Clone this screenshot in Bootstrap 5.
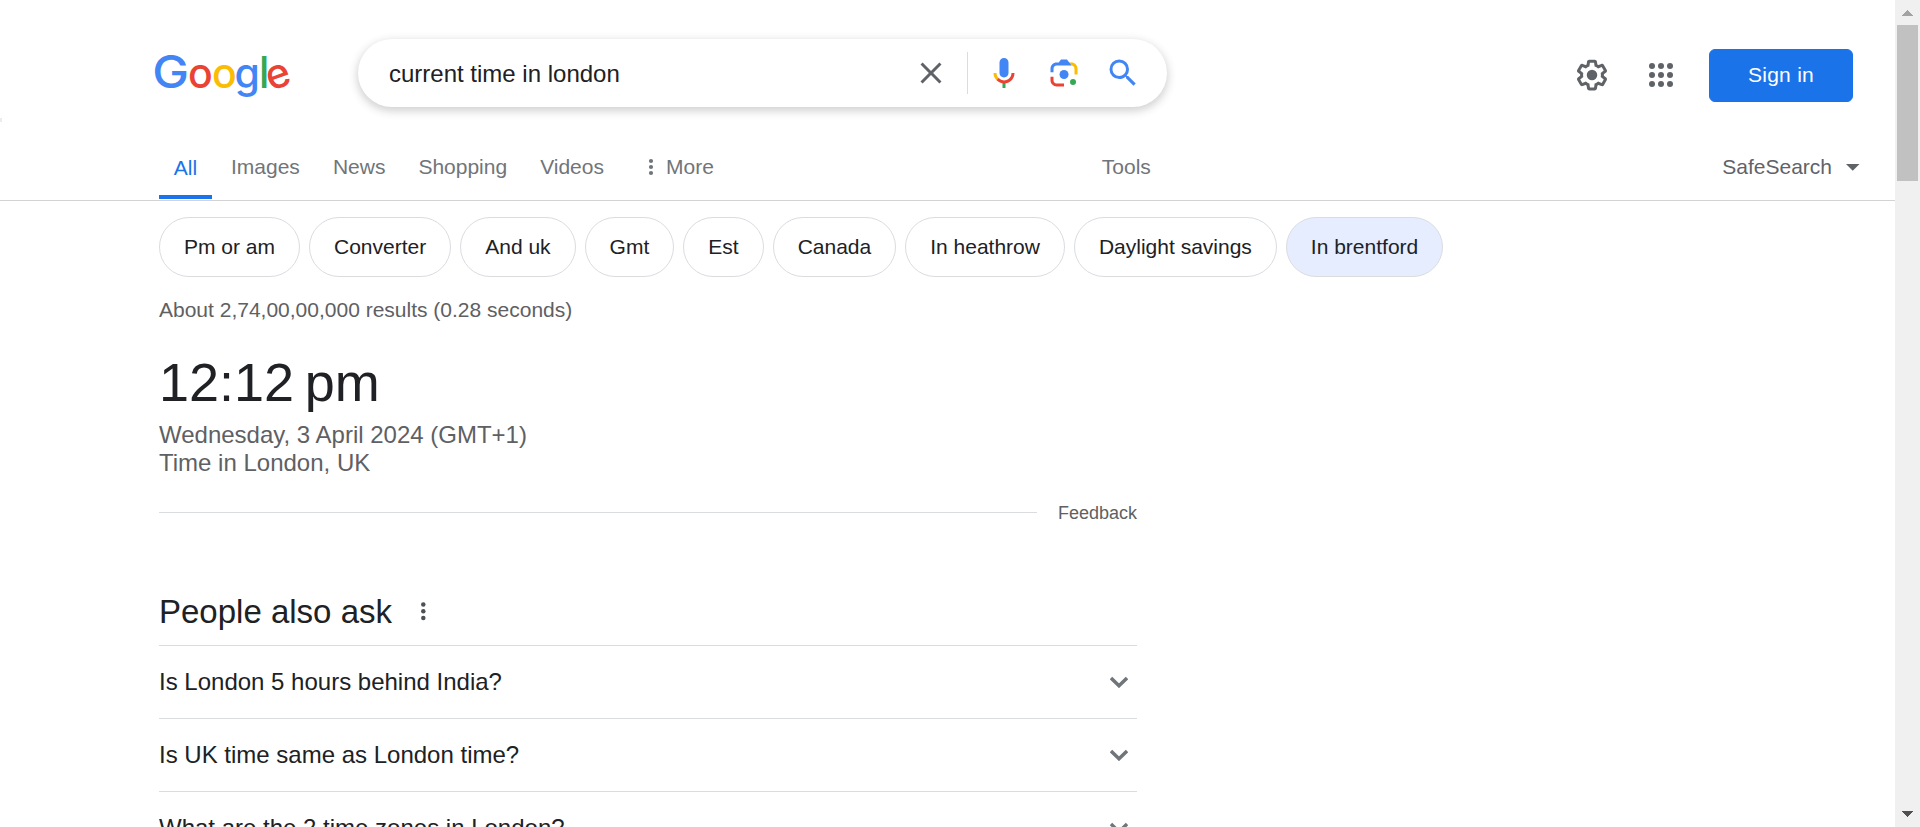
<!DOCTYPE html>
<html lang="en">
<head>
<meta charset="utf-8">
<meta name="viewport" content="width=device-width, initial-scale=1">
<title>current time in london - Google Search</title>
<link rel="stylesheet" href="https://cdn.jsdelivr.net/npm/bootstrap@5.3.0/dist/css/bootstrap.min.css">
<style>
  html, body { height: 100%; overflow: hidden; }
  body { font-family: "Liberation Sans", Arial, sans-serif; font-size: 21px; line-height: 24px; color: #202124; background: #fff; }
  svg { display: block; flex: none; }
  a { color: inherit; text-decoration: none; }
  .viewport { height: 827px; }
  .topbar { height: 135px; padding: 39px 42px 0 150px; }
  .brand { width: 142px; height: 60px; margin: 7px 66px 0 0; }
  .brand svg { overflow: visible; }
  .searchbox { width: 809px; height: 68px; padding: 0 26px 0 31px; border-radius: 34px; box-shadow: 0 3px 8px 1px rgba(64,60,67,.24); }
  .query { font-size: 24px; line-height: 28px; padding-top: 2px; }
  .split { width: 1px; height: 42px; background: #dadce0; margin: 0 18px 0 18px; }
  .signin { --bs-btn-bg: #1a73e8; --bs-btn-border-color: #1a73e8; width: 144px; height: 53px; margin: 10px 0 0 30px; padding: 0 0 1px; font-size: 21px; line-height: 24px; letter-spacing: .25px; border-radius: 6px; }
  .tabbar { height: 66px; padding-left: 159px; border-bottom: 1px solid #d2d3d5; color: #70757a; }
  .tabbar .nav-link { padding: 20px 0 0; margin-right: 33px; color: inherit; }
  .tabbar .nav-link.active { width: 53px; margin-right: 19px; padding-top: 21px; color: #1a73e8; border-bottom: 4px solid #1a73e8; }
  .safe { color: #5f6368; margin-right: 35px; padding-top: 20px; }
  .chips { gap: 9px; padding: 16px 0 0 159px; }
  .chip { height: 60px; padding: 0 24px; border: 1px solid #dadce0; border-radius: 30px; }
  .chip.on { background: #e5edff; }
  .results { width: 978px; margin-left: 159px; }
  .stats { margin-top: 21px; color: #5e6063; }
  .clock { margin-top: 30px; font-size: 54px; line-height: 60px; word-spacing: -4.5px; }
  .place { margin-top: 9px; font-size: 24px; line-height: 28px; color: #5e6063; }
  .feedback { margin-top: 24px; font-size: 18px; color: #5e6063; }
  .rule { height: 1px; background: #dadce0; margin: 0 21px 1px 0; }
  .paa { margin-top: 67px; height: 53px; font-size: 33px; line-height: 40px; font-weight: 400; }
  .question { height: 73px; padding-right: 9px; border-top: 1px solid #dadce0; font-size: 24px; line-height: 28px; }
  .scroller { width: 25px; background: #f0f0f0; }
  .thumb { width: 21px; height: 156px; margin-top: 9px; background: #c1c1c1; }
  .speck { left: 0; top: 118px; width: 2px; height: 4px; background: #ececec; }
</style>
</head>
<body>
<div class="viewport d-flex overflow-hidden position-relative">
  <div class="flex-grow-1">
    <header>
      <div class="topbar d-flex align-items-start">
        <a class="brand" href="#" aria-label="Google">
          <svg width="142" height="60" font-family="Inter, sans-serif" font-size="41" font-weight="500" text-anchor="middle">
            <text transform="translate(20.6 42.2) scale(1.2 1.11)" fill="#4285f4">G</text>
            <text transform="translate(50.3 42.2)" fill="#ea4335">o</text>
            <text transform="translate(74.3 42.2)" fill="#fbbc05">o</text>
            <text transform="translate(97.3 42.2)" fill="#4285f4">g</text>
            <text transform="translate(114.2 42) scale(1 1.08)" fill="#34a853">l</text>
            <text transform="translate(132 41.2) rotate(-20)" fill="#ea4335">e</text>
          </svg>
        </a>
        <div class="searchbox d-flex align-items-center">
          <div class="query flex-grow-1">current time in london</div>
          <svg width="36" height="36" viewBox="0 0 24 24" fill="#5f6368"><path d="M19 6.41L17.59 5 12 10.59 6.41 5 5 6.41 10.59 12 5 17.59 6.41 19 12 13.41 17.59 19 19 17.59 13.41 12z"/></svg>
          <div class="split"></div>
          <svg width="36" height="36" viewBox="0 0 24 24"><path fill="#4285f4" d="m12 15c1.66 0 3-1.31 3-2.97v-7.02c0-1.66-1.34-3.01-3-3.01s-3 1.34-3 3.01v7.02c0 1.66 1.34 2.97 3 2.97z"/><path fill="#34a853" d="m11 18.08h2v3.92h-2z"/><path fill="#fbbc05" d="m7.05 16.87c-1.27-1.33-2.05-2.83-2.05-4.87h2c0 1.45.56 2.42 1.47 3.38v.32l-1.15 1.18z"/><path fill="#ea4335" d="m12 16.93a4.97 5.25 0 0 1-3.54-1.55l-1.41 1.49c1.26 1.34 3.02 2.13 4.95 2.13 3.87 0 6.99-2.92 6.99-7h-1.99c0 2.92-2.24 4.93-5 4.93z"/></svg>
          <svg style="margin:0 23px 0 24px" width="36" height="36" viewBox="0 0 192 192"><circle fill="#34a853" cx="144.07" cy="144" r="16"/><circle fill="#4285f4" cx="96.07" cy="104" r="24"/><path fill="#ea4335" d="M24 135.2c0 18.11 14.69 32.8 32.8 32.8H96v-16l-40.1-.1c-8.8 0-15.9-8.19-15.9-17.9v-18H24z"/><path fill="#fbbc04" d="M168 72.8c0-18.11-14.69-32.8-32.8-32.8H116l20 16c8.8 0 16 8.29 16 18v30h16z"/><path fill="#4285f4" d="M112 24H80L68 40H56.8C38.69 40 24 54.69 24 72.8V92h16V74c0-9.71 7.2-18 16-18h80l-12-16z"/></svg>
          <svg width="36" height="36" viewBox="0 0 24 24" fill="#4285f4"><path d="M15.5 14h-.79l-.28-.27A6.471 6.471 0 0 0 16 9.5 6.5 6.5 0 1 0 9.5 16c1.61 0 3.09-.59 4.23-1.57l.27.28v.79l5 4.99L20.49 19l-4.99-5zm-6 0C7.01 14 5 11.99 5 9.5S7.01 5 9.5 5 14 7.01 14 9.5 11.99 14 9.5 14z"/></svg>
        </div>
        <svg class="ms-auto" style="margin-top:18px" width="36" height="36" viewBox="0 0 24 24" fill="#5f6368"><path d="M13.85 22.25h-3.7c-.74 0-1.36-.54-1.45-1.27l-.27-1.89c-.27-.14-.53-.29-.79-.46l-1.8.72c-.7.26-1.47-.03-1.81-.65L2.2 15.53c-.35-.66-.2-1.44.36-1.88l1.53-1.19c-.01-.15-.02-.3-.02-.46 0-.15.01-.31.02-.46l-1.52-1.19c-.59-.45-.74-1.26-.37-1.88l1.85-3.19c.34-.62 1.11-.9 1.79-.63l1.81.73c.26-.17.52-.32.78-.46l.27-1.91c.09-.7.71-1.25 1.44-1.25h3.7c.74 0 1.36.54 1.45 1.27l.27 1.89c.27.14.53.29.79.46l1.8-.72c.71-.26 1.48.03 1.82.65l1.84 3.18c.36.66.2 1.44-.36 1.88l-1.52 1.19c.01.15.02.3.02.46s-.01.31-.02.46l1.52 1.19c.56.45.72 1.23.37 1.86l-1.86 3.22c-.34.62-1.11.9-1.8.63l-1.8-.72c-.26.17-.52.32-.78.46l-.27 1.91c-.1.68-.72 1.22-1.46 1.22zm-3.23-2h2.76l.37-2.55.53-.22c.44-.18.88-.44 1.34-.78l.45-.34 2.38.96 1.38-2.4-2.03-1.58.07-.56c.03-.26.06-.51.06-.78s-.03-.53-.06-.78l-.07-.56 2.03-1.58-1.39-2.4-2.39.96-.45-.35c-.42-.32-.87-.58-1.33-.77l-.52-.22-.37-2.55h-2.76l-.37 2.55-.53.21c-.44.19-.88.44-1.34.79l-.45.33-2.38-.95-1.39 2.39 2.03 1.58-.07.56a7 7 0 0 0-.06.79c0 .26.02.53.06.78l.07.56-2.03 1.58 1.38 2.4 2.39-.96.45.35c.43.33.86.58 1.33.77l.53.22.38 2.55z"/><circle cx="12" cy="12" r="3.5"/></svg>
        <svg style="margin:18px 0 0 33px" width="36" height="36" viewBox="0 0 24 24" fill="#5f6368"><circle cx="6" cy="6" r="2"/><circle cx="12" cy="6" r="2"/><circle cx="18" cy="6" r="2"/><circle cx="6" cy="12" r="2"/><circle cx="12" cy="12" r="2"/><circle cx="18" cy="12" r="2"/><circle cx="6" cy="18" r="2"/><circle cx="12" cy="18" r="2"/><circle cx="18" cy="18" r="2"/></svg>
        <button class="btn btn-primary signin" type="button">Sign in</button>
      </div>
      <div class="tabbar d-flex align-items-stretch">
        <nav class="nav flex-nowrap align-items-stretch" style="height:64px">
          <a class="nav-link active text-center" href="#">All</a>
          <a class="nav-link" href="#">Images</a>
          <a class="nav-link" href="#">News</a>
          <a class="nav-link" href="#">Shopping</a>
          <a class="nav-link" href="#">Videos</a>
          <a class="nav-link d-flex" href="#"><svg style="margin:3px 3px 0 2px" width="24" height="18" fill="#70757a"><circle cx="12" cy="3" r="2.1"/><circle cx="12" cy="9" r="2.1"/><circle cx="12" cy="15" r="2.1"/></svg>More</a>
        </nav>
        <a style="padding-top:20px;margin-left:355px" href="#">Tools</a>
        <a class="safe ms-auto d-flex" href="#">SafeSearch<svg style="margin:9px 0 0 14px" width="14" height="7" fill="#5f6368"><path d="M0 0h13.5L6.75 6.7z"/></svg></a>
      </div>
    </header>
    <div class="chips d-flex">
      <a class="chip d-flex align-items-center" href="#">Pm or am</a>
      <a class="chip d-flex align-items-center" href="#">Converter</a>
      <a class="chip d-flex align-items-center" href="#">And uk</a>
      <a class="chip d-flex align-items-center" href="#">Gmt</a>
      <a class="chip d-flex align-items-center" href="#">Est</a>
      <a class="chip d-flex align-items-center" href="#">Canada</a>
      <a class="chip d-flex align-items-center" href="#">In heathrow</a>
      <a class="chip d-flex align-items-center" href="#">Daylight savings</a>
      <a class="chip on d-flex align-items-center" href="#">In brentford</a>
    </div>
    <main class="results">
      <div class="stats">About 2,74,00,00,000 results (0.28 seconds)</div>
      <div class="clock">12:12 pm</div>
      <div class="place">Wednesday, 3 April 2024 (GMT+1)<br>Time in London, UK</div>
      <div class="feedback d-flex align-items-center"><div class="rule flex-grow-1"></div><a href="#">Feedback</a></div>
      <h2 class="paa d-flex align-items-start mb-0">People also ask<svg style="margin:9px 0 0 25px" width="12" height="20" fill="#4d5156"><circle cx="6.3" cy="3.6" r="2.25"/><circle cx="6.3" cy="10.3" r="2.25"/><circle cx="6.3" cy="17" r="2.25"/></svg></h2>
      <div class="question d-flex align-items-center justify-content-between">Is London 5 hours behind India?<svg width="18" height="12" fill="none" stroke="#70757a" stroke-width="3.4"><path d="M1 2l8 7.8 8-7.8"/></svg></div>
      <div class="question d-flex align-items-center justify-content-between">Is UK time same as London time?<svg width="18" height="12" fill="none" stroke="#70757a" stroke-width="3.4"><path d="M1 2l8 7.8 8-7.8"/></svg></div>
      <div class="question d-flex align-items-center justify-content-between">What are the 2 time zones in London?<svg width="18" height="12" fill="none" stroke="#70757a" stroke-width="3.4"><path d="M1 2l8 7.8 8-7.8"/></svg></div>
    </main>
  </div>
  <div class="scroller d-flex flex-column align-items-center flex-shrink-0">
    <svg style="margin-top:10px" width="11" height="6" fill="#a3a3a3" shape-rendering="crispEdges"><path d="M0 6L5.5 0 11 6z"/></svg>
    <div class="thumb"></div>
    <svg class="mt-auto" style="margin-bottom:10px" width="11" height="6" fill="#505050" shape-rendering="crispEdges"><path d="M0 0h11L5.500 6z"/></svg>
  </div>
  <div class="speck position-absolute"></div>
</div>
<script src="https://cdn.jsdelivr.net/npm/bootstrap@5.3.0/dist/js/bootstrap.bundle.min.js"></script>
</body>
</html>
